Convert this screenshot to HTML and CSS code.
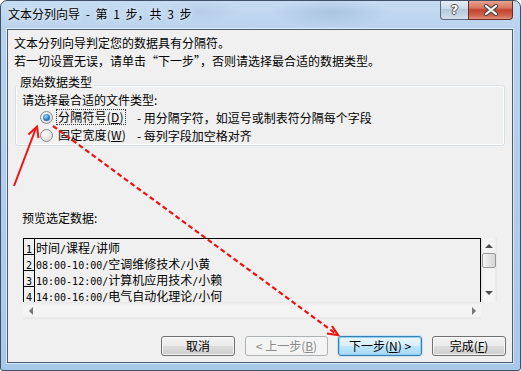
FILE: index.html
```html
<!DOCTYPE html>
<html lang="zh-CN">
<head>
  <meta charset="UTF-8">
  <title>文本分列向导</title>
  <link rel="stylesheet" href="styles.css">
</head>
<body>

  <div class="window">
    <div class="titlebar">
      <span class="title">文本分列向导 - 第 1 步，共 3 步</span>
      <div class="caption">
        <span class="cbtn help">?</span>
        <span class="cbtn close">
          <svg width="16" height="12" viewBox="0 0 16 12">
            <path d="M3 2 L13 10 M13 2 L3 10" stroke="#4a4a4a" stroke-width="4.2" stroke-linecap="round"/>
            <path d="M3 2 L13 10 M13 2 L3 10" stroke="#fff" stroke-width="2.2" stroke-linecap="round"/>
          </svg>
        </span>
      </div>
    </div>

    <div class="client">
      <p class="intro">文本分列向导判定您的数据具有分隔符。<br>若一切设置无误，请单击“下一步”，否则请选择最合适的数据类型。</p>

      <div class="group">
        <div class="group-title">原始数据类型</div>
        <div class="prompt">请选择最合适的文件类型:</div>
        <div class="radio-row">
          <span class="radio on"></span>
          <span class="rlabel focus">分隔符号(<u>D</u>)</span>
          <span class="rdesc">-&nbsp;用分隔字符，如逗号或制表符分隔每个字段</span>
        </div>
        <div class="radio-row">
          <span class="radio"></span>
          <span class="rlabel">固定宽度(<u>W</u>)</span>
          <span class="rdesc">-&nbsp;每列字段加空格对齐</span>
        </div>
      </div>

      <div class="preview-label">预览选定数据:</div>
      <div class="preview">
        <div class="preview-main">
          <div class="pane">
            <div class="row"><span class="rn">1</span><span class="cell">时间<i>/</i>课程<i>/</i>讲师</span></div>
            <div class="row"><span class="rn">2</span><span class="cell"><i>08:00-10:00/</i>空调维修技术<i>/</i>小黄</span></div>
            <div class="row"><span class="rn">3</span><span class="cell"><i>10:00-12:00/</i>计算机应用技术<i>/</i>小赖</span></div>
            <div class="row"><span class="rn">4</span><span class="cell"><i>14:00-16:00/</i>电气自动化理论<i>/</i>小何</span></div>
          </div>
          <div class="vscroll">
            <span class="arr up"></span>
            <span class="thumb"></span>
            <span class="arr down"></span>
          </div>
        </div>
        <div class="hscroll">
          <span class="arr left"></span>
          <span class="arr right"></span>
        </div>
      </div>

      <div class="buttons">
        <button class="btn w74">取消</button>
        <button class="btn w83 disabled">&lt; 上一步(<u>B</u>)</button>
        <button class="btn w84 default">下一步(<u>N</u>) &gt;</button>
        <button class="btn w74">完成(<u>F</u>)</button>
      </div>
    </div>

    <!-- red annotation arrows -->
    <svg class="annot" width="521" height="371" viewBox="0 0 521 371">
      <line x1="14" y1="186" x2="36" y2="128" stroke="#f01212" stroke-width="2"/>
      <polyline points="28.5,134.5 37,126.5 38.5,138" fill="none" stroke="#f01212" stroke-width="2"/>
      <line x1="53" y1="126" x2="335" y2="333" stroke="#f01212" stroke-width="2.2" stroke-dasharray="5 3"/>
      <polyline points="327,333.5 338,335 332,326" fill="none" stroke="#f01212" stroke-width="2.2"/>
    </svg>
  </div>

</body>
</html>
```

FILE: styles.css
```css
* { box-sizing: border-box; }

body {
  margin: 0;
  font-family: "Noto Sans CJK SC", sans-serif;
  font-size: 12px;
  color: #000;
  background: #fff;
}

.window {
  position: relative;
  width: 521px;
  height: 371px;
  display: flex;
  flex-direction: column;
  border: 1px solid #3f5068;
  border-radius: 7px 7px 3px 3px;
  background:
    radial-gradient(ellipse 60px 14px at 330px 12px, rgba(120, 150, 185, 0.3), transparent),
    radial-gradient(ellipse 40px 12px at 200px 10px, rgba(140, 165, 195, 0.2), transparent),
    linear-gradient(to bottom, #c6dcf2 0, #b9d2ed 28px, #a8c8ea 100%);
  overflow: hidden;
}

/* title bar */
.titlebar {
  height: 28px;
  display: flex;
  align-items: flex-start;
  padding-left: 7px;
}

.title {
  margin-top: 5px;
  line-height: 16px;
  word-spacing: 3px;
  text-shadow: 0 0 6px rgba(255, 255, 255, 0.9);
}

.caption {
  margin: -1px 7px 0 auto;
  display: flex;
}

.cbtn {
  height: 20px;
  display: flex;
  align-items: center;
  justify-content: center;
  border: 1px solid #5a6b82;
  border-top: none;
}

.help {
  width: 28px;
  border-right: none;
  border-radius: 0 0 0 4px;
  background: linear-gradient(to bottom, #e9f0f8 0, #ccdbeb 45%, #b5c8dc 50%, #d3e0ee 100%);
  color: #fff;
  font: bold 13px "DejaVu Sans", sans-serif;
  text-shadow: 1px 0 #555, -1px 0 #555, 0 1px #555, 0 -1px #555;
}

.close {
  width: 45px;
  border-color: #6b2e27;
  border-radius: 0 0 4px 0;
  background: linear-gradient(to bottom, #e8a898 0, #d8765f 42%, #c5422d 52%, #cf6049 80%, #e3907a 100%);
}

/* client area */
.client {
  height: 334px;
  margin: 0 7px 0 6px;
  border: 1px solid #4b5b70;
  background: #f0f0f0;
  box-shadow: 0 0 0 1px rgba(255, 255, 255, 0.55);
}

.intro {
  margin: 0;
  padding: 4px 0 0 6px;
  line-height: 18px;
}

.group {
  margin: 15px 7px 0 7px;
  padding: 0 6px 1px 6px;
  border: 1px solid #d5dfe5;
  border-radius: 3px;
  box-shadow: inset 0 0 0 1px #fff;
}

.group-title {
  width: max-content;
  margin: -12px 0 0 -4px;
  padding: 0 2px;
  line-height: 16px;
  background: #f0f0f0;
}

.prompt {
  margin-top: 2px;
  line-height: 16px;
}

.radio-row {
  height: 18px;
  display: flex;
  align-items: center;
  padding-left: 18px;
  white-space: nowrap;
}

.radio {
  width: 13px;
  height: 13px;
  flex-shrink: 0;
  border-radius: 50%;
  border: 1px solid #8b8d8f;
  background: radial-gradient(circle at 40% 35%, #ffffff 0, #e8e8e8 45%, #cfcfcf 100%);
  display: flex;
  align-items: center;
  justify-content: center;
}

.radio.on::after {
  content: "";
  width: 7px;
  height: 7px;
  border-radius: 50%;
  background: radial-gradient(circle at 40% 35%, #aee0ff 0, #3a93d8 40%, #124d86 100%);
}

.rlabel {
  width: 70px;
  flex-shrink: 0;
  margin-left: 3px;
  padding: 0 1px;
  line-height: 14px;
  letter-spacing: 0.2px;
  border: 1px dotted transparent;
}

.rlabel.focus { border-color: #333; }

.rdesc { margin-left: 11px; }

/* preview */
.preview-label {
  margin: 64px 0 0 14px;
  line-height: 16px;
}

.preview {
  width: 474px;
  margin: 12px 0 0 15px;
}

.preview-main {
  display: flex;
  height: 64px;
}

.pane {
  flex: 1;
  border: 1px solid #000;
  border-bottom: none;
  overflow: hidden;
}

.row {
  height: 16px;
  display: flex;
}

.rn {
  width: 11px;
  border-right: 1px solid #000;
  border-bottom: 1px solid #000;
  font: 10px "DejaVu Sans Mono", monospace;
  line-height: 10px;
  padding-top: 6px;
  text-align: center;
  flex-shrink: 0;
}

.cell {
  padding-left: 1px;
  line-height: 17px;
  white-space: nowrap;
}

.cell i {
  font: 10px "DejaVu Sans Mono", monospace;
  font-style: normal;
}

.vscroll {
  width: 16px;
  display: flex;
  flex-direction: column;
  align-items: center;
  background: linear-gradient(to right, #e6e6e6, #f4f4f4 3px, #f4f4f4 13px, #e6e6e6);
}

.hscroll {
  width: 458px;
  height: 17px;
  display: flex;
  align-items: center;
  justify-content: space-between;
  padding: 0 5px 0 6px;
  background: linear-gradient(to bottom, #e6e6e6, #f4f4f4 3px, #f4f4f4 14px, #e6e6e6);
}

.arr {
  width: 0;
  height: 0;
  border: 4px solid transparent;
}

.arr.up { border-bottom: 4px solid #4e4e4e; border-top-width: 0; margin-top: 6px; }
.arr.down { border-top: 4px solid #4e4e4e; border-bottom-width: 0; margin-top: auto; margin-bottom: 7px; }
.arr.left { border-right: 4px solid #777; border-left-width: 0; }
.arr.right { border-left: 4px solid #777; border-right-width: 0; }

.thumb {
  width: 14px;
  height: 15px;
  margin-top: 5px;
  border: 1px solid #9a9a9a;
  border-radius: 2px;
  background: linear-gradient(to right, #f6f6f6, #e4e4e4 50%, #d6d6d6);
}

/* buttons */
.buttons {
  display: flex;
  justify-content: flex-end;
  gap: 10px;
  margin: 17px 6px 0 0;
}

.btn {
  height: 20px;
  padding: 0;
  font: inherit;
  line-height: 18px;
  color: #000;
  border: 1px solid #707070;
  border-radius: 3px;
  background: linear-gradient(to bottom, #f2f2f2 0, #ebebeb 48%, #dddddd 52%, #cfcfcf 100%);
  box-shadow: inset 0 0 0 1px rgba(255, 255, 255, 0.75);
}

.w74 { width: 74px; }
.w83 { width: 83px; }
.w84 { width: 84px; }

.btn.disabled {
  color: #8a8a8a;
  border-color: #adb2b5;
  background: #f4f4f4;
  box-shadow: none;
}

.btn.default {
  border-color: #3c7fb1;
  background: linear-gradient(to bottom, #eaf6fd 0, #d9f0fc 48%, #bee6fd 52%, #a7d9f5 100%);
  box-shadow: inset 0 0 0 1px #8fd0f5, 0 0 2px #6ec0ee;
}

.annot {
  position: absolute;
  top: -1px;
  left: -1px;
  pointer-events: none;
}
```
